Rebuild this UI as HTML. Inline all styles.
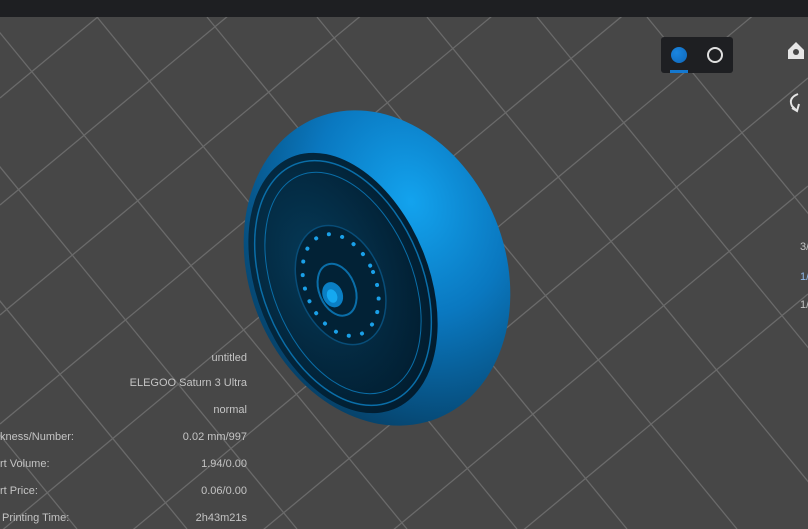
<!DOCTYPE html>
<html><head><meta charset="utf-8"><style>
html,body{margin:0;padding:0;width:808px;height:529px;overflow:hidden;background:#474747;font-family:"Liberation Sans",sans-serif;position:relative}
.bar{position:absolute;left:0;top:0;width:808px;height:17px;background:#1e1f22}
.t{position:absolute;color:#c4c4c4;font-size:11px;line-height:13px;white-space:nowrap}
.r{right:561px;text-align:right}
</style></head><body>
<svg width="808" height="529" style="position:absolute;left:0;top:0">
<g stroke="#6a6a6a" stroke-width="1.3" fill="none">
<line x1="-123" y1="17" x2="297" y2="529"/><line x1="-13" y1="17" x2="407" y2="529"/>
<line x1="97" y1="17" x2="517" y2="529"/><line x1="207" y1="17" x2="627" y2="529"/>
<line x1="317" y1="17" x2="737" y2="529"/><line x1="427" y1="17" x2="847" y2="529"/>
<line x1="537" y1="17" x2="957" y2="529"/><line x1="647" y1="17" x2="1067" y2="529"/>
<line x1="-233" y1="17" x2="187" y2="529"/><line x1="-343" y1="17" x2="77" y2="529"/>
<line x1="0" y1="98" x2="808" y2="-572"/><line x1="0" y1="205" x2="808" y2="-465"/>
<line x1="0" y1="315" x2="808" y2="-355"/><line x1="0" y1="424" x2="808" y2="-246"/>
<line x1="0" y1="532" x2="808" y2="-138"/><line x1="0" y1="640" x2="808" y2="-30"/>
<line x1="0" y1="748" x2="808" y2="78"/><line x1="0" y1="856" x2="808" y2="186"/>
<line x1="0" y1="964" x2="808" y2="294"/>
</g>
<defs>
<radialGradient id="tg" cx="0.72" cy="0.35" r="0.8">
<stop offset="0" stop-color="#13a3ee"/><stop offset="0.45" stop-color="#0a78c0"/><stop offset="1" stop-color="#053d62"/></radialGradient>
<radialGradient id="fg" cx="0.4" cy="0.4" r="0.7">
<stop offset="0" stop-color="#063a58"/><stop offset="1" stop-color="#01192a"/></radialGradient>
</defs>
<g transform="rotate(-22 377 268)">
<ellipse cx="377" cy="268" rx="128" ry="162" fill="url(#tg)"/>
</g>
<g transform="rotate(-22 343 283)">
<ellipse cx="343" cy="283" rx="86" ry="136" fill="url(#fg)"/>
<ellipse cx="343" cy="283" rx="80" ry="128" fill="none" stroke="#0a6ea8" stroke-width="1.5"/>
<ellipse cx="343" cy="283" rx="70" ry="116" fill="none" stroke="#0a6ea8" stroke-width="1"/>
<ellipse cx="340" cy="284" rx="42" ry="62" fill="#022236" stroke="#084d78" stroke-width="1.5"/>
<ellipse cx="340" cy="284" rx="35" ry="53" fill="none" stroke="#1aa0e8" stroke-width="4" stroke-linecap="round" stroke-dasharray="0.1 13.5"/>
<ellipse cx="335" cy="287" rx="18" ry="27" fill="none" stroke="#0a6ea8" stroke-width="2"/>
<ellipse cx="329" cy="290" rx="10" ry="13" fill="#0a7fc4"/>
<ellipse cx="328" cy="291" rx="5" ry="7" fill="#15a8f0"/>
</g>
</svg>
<div class="bar"></div>
<div style="position:absolute;left:661px;top:37px;width:72px;height:36px;background:#1e1f22;border-radius:3px"></div>
<div style="position:absolute;left:671px;top:47px;width:16px;height:16px;border-radius:50%;background:radial-gradient(circle at 35% 35%,#1a86e0,#0f66b8)"></div>
<div style="position:absolute;left:670px;top:70px;width:18px;height:3px;background:#1478d0"></div>
<div style="position:absolute;left:707px;top:47px;width:12px;height:12px;border-radius:50%;border:2px solid #e0e0e0"></div>
<svg width="20" height="80" style="position:absolute;left:786px;top:38px">
<path d="M2 12 L10 4 L18 12 L18 21 L2 21Z" fill="#e6e6e6"/><circle cx="10" cy="14" r="3" fill="#474747"/>
<path d="M12 56 Q2 60 6 68 L10 72" stroke="#e6e6e6" stroke-width="2" fill="none"/><path d="M6 70 L11 73 L13 66" stroke="#e6e6e6" stroke-width="2" fill="none"/>
</svg>
<div class="t r" style="top:352px">untitled</div>
<div class="t r" style="top:377px">ELEGOO Saturn 3 Ultra</div>
<div class="t r" style="top:404px">normal</div>
<div class="t r" style="top:431px">0.02 mm/997</div>
<div class="t r" style="top:458px">1.94/0.00</div>
<div class="t r" style="top:485px">0.06/0.00</div>
<div class="t r" style="top:512px">2h43m21s</div>
<div class="t" style="left:0;top:431px">kness/Number:</div>
<div class="t" style="left:0;top:458px">rt Volume:</div>
<div class="t" style="left:0;top:485px">rt Price:</div>
<div class="t" style="left:2px;top:512px">Printing Time:</div>
<div class="t" style="left:800px;top:241px">3/</div>
<div class="t" style="left:800px;top:271px;color:#8fb8e8">1/</div>
<div class="t" style="left:800px;top:299px">1/</div>
</body></html>
